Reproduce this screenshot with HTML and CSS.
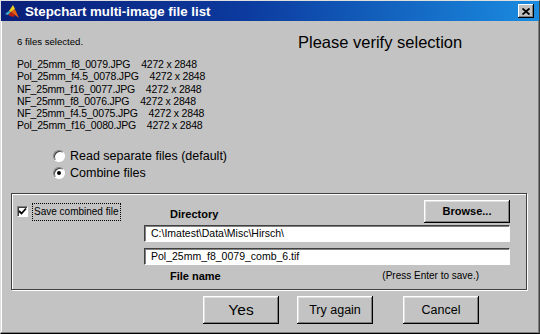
FILE: index.html
```html
<!DOCTYPE html>
<html lang="en">
<head>
  <meta charset="UTF-8" />
  <title>Stepchart multi-image file list</title>
  <link rel="stylesheet" href="styles.css">
</head>
<body>
  <div class="window">
    <div class="titlebar">
      <svg class="app-icon" width="16" height="16" viewBox="0 0 16 16">
        <polygon points="1,11 5,8 7,9 4,12" fill="#3ab0c8"/>
        <polygon points="5,8 9,2 11,6 7,9" fill="#f0d020"/>
        <polygon points="9,2 15,15 11,12 7,9 11,6" fill="#e86010"/>
        <polygon points="7,9 11,12 9,14 4,12" fill="#c02010"/>
      </svg>
      <span class="title">Stepchart multi-image file list</span>
      <button class="close-btn" aria-label="Close">
        <svg width="8" height="7" viewBox="0 0 8 7">
          <path d="M0.5 0.5 L7.5 6.5 M7.5 0.5 L0.5 6.5" stroke="#000" stroke-width="1.8"/>
        </svg>
      </button>
    </div>

    <div class="content">
      <div class="top-row">
        <div class="files">
          <div class="count">6 files selected.</div>
          <ul class="file-list">
            <li>Pol_25mm_f8_0079.JPG    4272 x 2848</li>
            <li>Pol_25mm_f4.5_0078.JPG    4272 x 2848</li>
            <li>NF_25mm_f16_0077.JPG    4272 x 2848</li>
            <li>NF_25mm_f8_0076.JPG    4272 x 2848</li>
            <li>NF_25mm_f4.5_0075.JPG    4272 x 2848</li>
            <li>Pol_25mm_f16_0080.JPG    4272 x 2848</li>
          </ul>
        </div>
        <h1 class="heading">Please verify selection</h1>
      </div>

      <div class="radios">
        <label class="radio"><span class="radio-dot"></span>Read separate files (default)</label>
        <label class="radio"><span class="radio-dot checked"></span>Combine files</label>
      </div>

      <div class="group">
        <div class="save">
          <span class="checkbox">
            <svg width="9" height="9" viewBox="0 0 9 9">
              <path d="M1 4 L3.5 6.5 L8 1.5" fill="none" stroke="#000" stroke-width="1.8"/>
            </svg>
          </span>
          <span class="focus-label">Save combined file</span>
        </div>
        <div class="fields">
          <div class="field-head">
            <span class="field-label">Directory</span>
            <button class="btn btn-browse">Browse...</button>
          </div>
          <div class="text-field">C:\Imatest\Data\Misc\Hirsch\</div>
          <div class="text-field second">Pol_25mm_f8_0079_comb_6.tif</div>
          <div class="field-foot">
            <span class="field-label">File name</span>
            <span class="hint">(Press Enter to save.)</span>
          </div>
        </div>
      </div>

      <div class="actions">
        <button class="btn btn-yes">Yes</button>
        <button class="btn btn-try">Try again</button>
        <button class="btn btn-cancel">Cancel</button>
      </div>
    </div>
  </div>
</body>
</html>
```

FILE: styles.css
```css
html, body {
  margin: 0;
  padding: 0;
  background: #c0c0c0;
}
body {
  font-family: "Liberation Sans", Arial, sans-serif;
  color: #000;
}
.window {
  width: 540px;
  height: 334px;
  box-sizing: border-box;
  background: #c3c3c3;
  border-top: 1px solid #dfdfdf;
  border-left: 1px solid #dfdfdf;
  border-right: 1px solid #404040;
  border-bottom: 1px solid #000;
  box-shadow: inset -1px -1px 0 #808080, inset 1px 0 0 #fff;
}

/* title bar */
.titlebar {
  height: 20px;
  display: flex;
  align-items: center;
  background: linear-gradient(to right, #0a1f78 0%, #0c3a9e 45%, #1a8ce0 100%);
  padding: 0 4px 0 3px;
}
.app-icon {
  flex: none;
  margin-right: 5px;
}
.title {
  flex: 1;
  color: #fff;
  font-weight: bold;
  font-size: 13.3px;
  white-space: nowrap;
}
.close-btn {
  width: 16px;
  height: 14px;
  padding: 0;
  margin-right: 1px;
  display: flex;
  align-items: center;
  justify-content: center;
  background: #c0c0c0;
  border: none;
  box-shadow: inset -1px -1px 0 #000, inset 1px 1px 0 #fff, inset -2px -2px 0 #808080;
}

/* main area */
.content {
  padding: 15px 0 0 16px;
}
.top-row {
  display: flex;
}
.files {
  width: 281px;
  flex: none;
}
.count {
  font-size: 9.6px;
  line-height: 12px;
}
.file-list {
  list-style: none;
  margin: 10px 0 0;
  padding: 0;
  font-size: 10.5px;
  letter-spacing: -0.2px;
  line-height: 12.3px;
}
.file-list li {
  white-space: pre;
}
.heading {
  margin: -3px 0 0;
  font-size: 16.5px;
  line-height: 18px;
  font-weight: normal;
}

/* radios */
.radios {
  margin: 17px 0 0 36px;
  display: flex;
  flex-direction: column;
  gap: 2px;
}
.radio {
  display: flex;
  align-items: center;
  font-size: 12.5px;
  line-height: 15px;
}
.radio-dot {
  width: 12px;
  height: 12px;
  box-sizing: border-box;
  border-radius: 50%;
  background: #fff;
  border: 1px solid;
  border-color: #808080 #fff #fff #808080;
  box-shadow: inset 1px 1px 0 #404040;
  margin-right: 5px;
  display: flex;
  align-items: center;
  justify-content: center;
}
.radio-dot.checked::after {
  content: "";
  width: 4px;
  height: 4px;
  border-radius: 50%;
  background: #000;
}

/* save group */
.group {
  margin: 12px 0 0 -6px;
  width: 516px;
  height: 97px;
  box-sizing: border-box;
  border: 1px solid #404040;
  box-shadow: inset 1px 1px 0 #fff, 1px 1px 0 #fff;
  display: flex;
  padding: 6px 16px 0 5px;
}
.save {
  width: 127px;
  flex: none;
  display: flex;
  align-items: center;
  align-self: flex-start;
  margin-top: 3px;
  font-size: 10px;
}
.checkbox {
  width: 11px;
  height: 11px;
  box-sizing: border-box;
  background: #fff;
  border: 1px solid;
  border-color: #808080 #fff #fff #808080;
  box-shadow: inset 1px 1px 0 #404040;
  display: flex;
  align-items: center;
  justify-content: center;
  margin-right: 4px;
}
.focus-label {
  border: 1px dotted #000;
  padding: 2px 1px 3px 1px;
  line-height: 11px;
}
.fields {
  flex: 1;
  display: flex;
  flex-direction: column;
}
.field-head {
  display: flex;
  justify-content: space-between;
  align-items: center;
  height: 23px;
  margin-bottom: 2px;
}
.field-label {
  font-weight: bold;
  font-size: 11px;
  margin-left: 26px;
  padding-top: 5px;
}
.text-field {
  height: 17px;
  box-sizing: border-box;
  background: #fff;
  border: 1px solid;
  border-color: #404040 #fff #fff #404040;
  box-shadow: inset 1px 1px 0 #808080;
  font-size: 10.5px;
  line-height: 15px;
  padding-left: 6px;
  white-space: nowrap;
}
.text-field.second {
  margin-top: 6px;
}
.field-foot {
  display: flex;
  justify-content: space-between;
  align-items: center;
  margin-top: 4px;
  height: 14px;
}
.field-foot .field-label {
  padding-top: 0;
}
.hint {
  font-size: 10px;
  margin-right: 31px;
}

/* buttons */
.btn {
  font-family: "Liberation Sans", Arial, sans-serif;
  background: #c3c3c3;
  color: #000;
  border: none;
  padding: 0;
  box-shadow: inset -1px -1px 0 #000, inset 1px 1px 0 #fff, inset -2px -2px 0 #808080, inset 2px 2px 0 #dfdfdf;
  cursor: pointer;
}
.btn-browse {
  width: 86px;
  height: 23px;
  font-weight: bold;
  font-size: 11px;
}
.actions {
  display: flex;
  margin: 6px 0 0 186px;
}
.actions .btn {
  width: 76px;
  height: 28px;
  font-size: 12.5px;
}
.actions .btn-yes {
  font-size: 15.5px;
}
.actions .btn-try {
  margin-left: 18px;
}
.actions .btn-cancel {
  margin-left: 30px;
}
```
